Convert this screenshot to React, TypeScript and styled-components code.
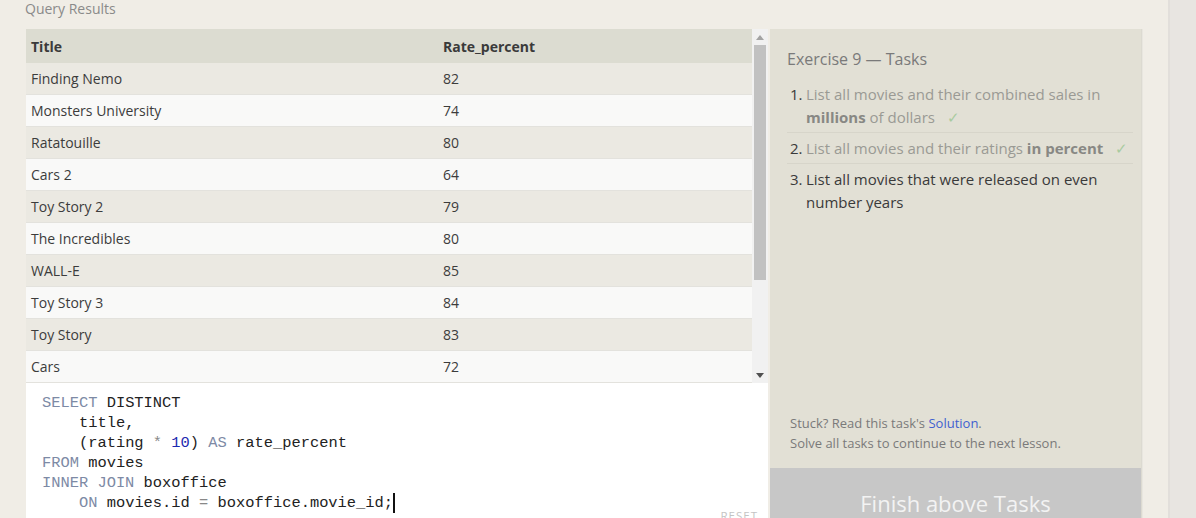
import React from 'react'
import styled, { createGlobalStyle } from 'styled-components'

const GlobalStyle = createGlobalStyle`
  html, body {
    margin: 0;
    padding: 0;
    background: #f0ede6;
    overflow: hidden;
  }
  body {
    font-family: 'Open Sans', 'Noto Sans', sans-serif;
    color: #333;
  }
`

const Page = styled.div`
  display: flex;
  width: 1196px;
  height: 518px;
  overflow: hidden;
`

const Main = styled.div`
  width: 1168px;
  flex: none;
  padding-left: 26px;
  box-sizing: border-box;
`

const Side = styled.div`
  flex: 1;
  background: #e8e5e1;
  border-left: 2px solid #e2dfdb;
`

const SectionLabel = styled.div`
  height: 29px;
  margin-left: -1px;
  font-size: 14px;
  line-height: 18px;
  color: #8a8a8a;
`

const Columns = styled.div`
  display: flex;
  gap: 2px;
  align-items: flex-start;
`

const LeftColumn = styled.div`
  width: 742px;
  display: flex;
  flex-direction: column;
`

const ResultsBox = styled.div`
  display: flex;
  height: 354px;
`

const Table = styled.div`
  flex: 1;
  display: flex;
  flex-direction: column;
`

const Row = styled.div<{ $head?: boolean; $odd?: boolean }>`
  display: grid;
  grid-template-columns: 412px 1fr;
  height: ${({ $head }) => ($head ? '34px' : '31px')};
  border-bottom: ${({ $head }) => ($head ? 'none' : '1px solid #e3e2dd')};
  background: ${({ $head, $odd }) => ($head ? '#dcdcd1' : $odd ? '#ebe9e2' : '#f9f9f8')};
  font-size: 14px;
  font-weight: ${({ $head }) => ($head ? 700 : 400)};
  color: ${({ $head }) => ($head ? '#3a3a3a' : '#3c3c3c')};
  align-items: center;
`

const Cell = styled.div`
  padding-left: 5px;
  white-space: nowrap;
`

const ScrollTrack = styled.div`
  width: 16px;
  background: #f1f1f1;
  display: flex;
  flex-direction: column;
  align-items: center;
`

const ArrowBox = styled.div`
  height: 16px;
  width: 16px;
  display: flex;
  align-items: center;
  justify-content: center;
`

const Thumb = styled.div`
  width: 12px;
  height: 235px;
  background: #c1c1c1;
`

const Filler = styled.div`
  flex: 1;
`

const Editor = styled.div`
  position: relative;
  background: #fff;
  height: 135px;
  padding: 10px 0 0 16px;
  box-sizing: border-box;
  font-family: 'Liberation Mono', 'DejaVu Sans Mono', monospace;
  font-size: 15.4px;
  line-height: 20px;
  color: #222;
  white-space: pre;
`

const Kw = styled.span`
  color: #7d8aa5;
`

const Num = styled.span`
  color: #1c2ab0;
`

const Op = styled.span`
  color: #888;
`

const Caret = styled.span`
  display: inline-block;
  width: 2px;
  height: 20px;
  background: #111;
  vertical-align: top;
`

const Reset = styled.div`
  position: absolute;
  right: 10px;
  top: 123px;
  font-family: 'Open Sans', sans-serif;
  font-size: 11.5px;
  letter-spacing: 1px;
  color: #c4c4c4;
`

const Panel = styled.div`
  width: 371px;
  height: 489px;
  display: flex;
  flex-direction: column;
  background: #e2e0d5;
  box-shadow: 1px 0 0 #dcdad1, 2px 0 0 #e8e6df;
`

const PanelBody = styled.div`
  flex: 1;
  display: flex;
  flex-direction: column;
  padding: 19px 8px 0 17px;
`

const PanelTitle = styled.div`
  font-size: 16px;
  line-height: 22px;
  color: #7a7a7a;
  margin-bottom: 13px;
`

const TaskList = styled.ol`
  margin: 0;
  padding: 0;
  list-style: none;
`

const Task = styled.li<{ $done?: boolean; $last?: boolean }>`
  display: flex;
  gap: 4px;
  font-size: 15px;
  line-height: 23px;
  padding: 0 0 3px 3px;
  margin-bottom: 4px;
  border-bottom: ${({ $last }) => ($last ? 'none' : '1px solid #d7d5ca')};
  color: ${({ $done }) => ($done ? '#9a9a94' : '#3a3a3a')};
  b {
    color: #888884;
  }
`

const TaskNum = styled.span`
  color: #3a3a3a;
  flex: none;
  width: 12px;
`

const Check = styled.span`
  color: #a9cba0;
  margin-left: 12px;
`

const Hint = styled.div`
  margin-top: auto;
  padding-bottom: 15px;
  padding-left: 3px;
  font-size: 13px;
  line-height: 20px;
  color: #7a7a7a;
  a {
    color: #3f5fd0;
    text-decoration: none;
  }
`

const FinishButton = styled.div`
  height: 50px;
  background: #c7c7c7;
  color: #f3f3f3;
  font-size: 22px;
  line-height: 30px;
  display: flex;
  justify-content: center;
  padding-top: 20px;
  box-sizing: border-box;
`

const rows: [string, number][] = [
  ['Finding Nemo', 82],
  ['Monsters University', 74],
  ['Ratatouille', 80],
  ['Cars 2', 64],
  ['Toy Story 2', 79],
  ['The Incredibles', 80],
  ['WALL-E', 85],
  ['Toy Story 3', 84],
  ['Toy Story', 83],
  ['Cars', 72],
]

function Arrow({ up }: { up?: boolean }) {
  return (
    <svg width="8" height="5" viewBox="0 0 8 5">
      <path d={up ? 'M0 5 L4 0 L8 5 Z' : 'M0 0 L4 5 L8 0 Z'} fill={up ? '#a3a3a3' : '#505050'} />
    </svg>
  )
}

export default function App() {
  return (
    <>
      <GlobalStyle />
      <Page>
        <Main>
          <SectionLabel>Query Results</SectionLabel>
          <Columns>
            <LeftColumn>
              <ResultsBox>
                <Table>
                  <Row $head>
                    <Cell>Title</Cell>
                    <Cell>Rate_percent</Cell>
                  </Row>
                  {rows.map(([title, rate], i) => (
                    <Row key={title} $odd={i % 2 === 0}>
                      <Cell>{title}</Cell>
                      <Cell>{rate}</Cell>
                    </Row>
                  ))}
                </Table>
                <ScrollTrack>
                  <ArrowBox>
                    <Arrow up />
                  </ArrowBox>
                  <Thumb />
                  <Filler />
                  <ArrowBox>
                    <Arrow />
                  </ArrowBox>
                </ScrollTrack>
              </ResultsBox>
              <Editor>
                <Kw>SELECT</Kw> DISTINCT{'\n'}
                {'    '}title,{'\n'}
                {'    '}(rating <Op>*</Op> <Num>10</Num>) <Kw>AS</Kw> rate_percent{'\n'}
                <Kw>FROM</Kw> movies{'\n'}
                <Kw>INNER JOIN</Kw> boxoffice{'\n'}
                {'    '}<Kw>ON</Kw> movies.id <Op>=</Op> boxoffice.movie_id;<Caret />
                <Reset>RESET</Reset>
              </Editor>
            </LeftColumn>
            <Panel>
              <PanelBody>
                <PanelTitle>Exercise 9 — Tasks</PanelTitle>
                <TaskList>
                  <Task $done>
                    <TaskNum>1.</TaskNum>
                    <span>
                      List all movies and their combined sales in <b>millions</b> of dollars
                      <Check>✓</Check>
                    </span>
                  </Task>
                  <Task $done>
                    <TaskNum>2.</TaskNum>
                    <span>
                      List all movies and their ratings <b>in percent</b>
                      <Check>✓</Check>
                    </span>
                  </Task>
                  <Task $last>
                    <TaskNum>3.</TaskNum>
                    <span>List all movies that were released on even number years</span>
                  </Task>
                </TaskList>
                <Hint>
                  Stuck? Read this task's <a href="#">Solution</a>.
                  <br />
                  Solve all tasks to continue to the next lesson.
                </Hint>
              </PanelBody>
              <FinishButton>Finish above Tasks</FinishButton>
            </Panel>
          </Columns>
        </Main>
        <Side />
      </Page>
    </>
  )
}
